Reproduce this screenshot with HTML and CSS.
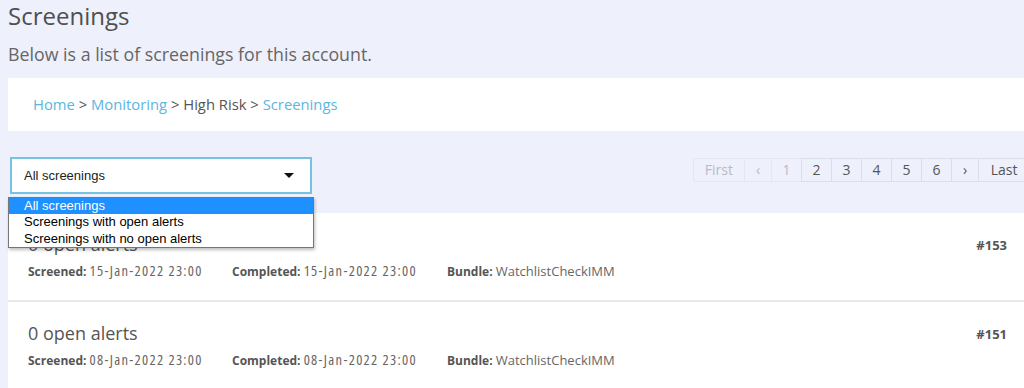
FILE: index.html
```html
<!DOCTYPE html>
<html>
<head>
    <title>Screenings</title>
    <link rel="stylesheet" href="styles.css">
</head>
<body>
    <div class="page">
        <h1 class="page-title">Screenings</h1>
        <p class="page-intro">Below is a list of screenings for this account.</p>

        <div class="breadcrumb">
            <a href="#">Home</a> &gt; <a href="#">Monitoring</a> &gt; High Risk &gt; <a href="#">Screenings</a>
        </div>

        <div class="toolbar">
            <div class="filter">
                <div class="filter-box">
                    <span>All screenings</span>
                    <span class="filter-arrow"></span>
                </div>
                <div class="filter-list">
                    <div class="filter-option selected">All screenings</div>
                    <div class="filter-option">Screenings with open alerts</div>
                    <div class="filter-option">Screenings with no open alerts</div>
                </div>
            </div>

            <div class="pager">
                <span class="page-item disabled">First</span>
                <span class="page-item disabled arrow">&lsaquo;</span>
                <span class="page-item disabled">1</span>
                <span class="page-item">2</span>
                <span class="page-item">3</span>
                <span class="page-item">4</span>
                <span class="page-item">5</span>
                <span class="page-item">6</span>
                <span class="page-item arrow">&rsaquo;</span>
                <span class="page-item">Last</span>
            </div>
        </div>

        <div class="screenings">
            <div class="screening">
                <div class="screening-head">
                    <div class="screening-title">0 open alerts</div>
                    <div class="screening-id">#153</div>
                </div>
                <div class="screening-meta">
                    <span class="meta"><b>Screened:</b> <span class="date">15-Jan-2022 23:00</span></span>
                    <span class="meta"><b>Completed:</b> <span class="date">15-Jan-2022 23:00</span></span>
                    <span class="meta"><b>Bundle:</b> <span class="bundle">WatchlistCheckIMM</span></span>
                </div>
            </div>
            <div class="screening">
                <div class="screening-head">
                    <div class="screening-title">0 open alerts</div>
                    <div class="screening-id">#151</div>
                </div>
                <div class="screening-meta">
                    <span class="meta"><b>Screened:</b> <span class="date">08-Jan-2022 23:00</span></span>
                    <span class="meta"><b>Completed:</b> <span class="date">08-Jan-2022 23:00</span></span>
                    <span class="meta"><b>Bundle:</b> <span class="bundle">WatchlistCheckIMM</span></span>
                </div>
            </div>
        </div>
    </div>
</body>
</html>
```

FILE: styles.css
```css
body {
    margin: 0;
    padding: 0;
    font-family: "Open Sans", sans-serif;
    background-color: #eef0fc;
    color: #555;
    overflow: hidden;
}
.page {
    width: 1022px;
    padding-left: 8px;
}
.page-title {
    margin: 0;
    padding-top: 1px;
    font-size: 24px;
    font-weight: 400;
    line-height: 30px;
    color: #4f4f4f;
}
.page-intro {
    margin: 11px 0 0;
    font-size: 17.8px;
    line-height: 24px;
    color: #666;
}
.breadcrumb {
    margin-top: 12px;
    height: 53px;
    padding-left: 25px;
    background-color: #fff;
    font-size: 14.8px;
    line-height: 53px;
    color: #555;
}
.breadcrumb a {
    color: #5cb6e0;
    text-decoration: none;
}
.toolbar {
    display: flex;
    justify-content: space-between;
    align-items: flex-start;
    margin-top: 26px;
    height: 56px;
    position: relative;
    z-index: 2;
}
.filter {
    position: relative;
    margin-left: 2px;
}
.filter-box {
    width: 298px;
    height: 33px;
    border: 2px solid #76c3e1;
    background-color: #fff;
    display: flex;
    align-items: center;
    justify-content: space-between;
    font-family: "Liberation Sans", Arial, sans-serif;
    font-size: 13px;
    color: #222;
}
.filter-box span:first-child {
    padding-left: 12px;
}
.filter-arrow {
    width: 0;
    height: 0;
    border-left: 5px solid transparent;
    border-right: 5px solid transparent;
    border-top: 5px solid #111;
    margin-right: 16px;
}
.filter-list {
    position: absolute;
    top: 40px;
    left: -2px;
    width: 304px;
    border: 1px solid #767676;
    background-color: #fff;
    box-shadow: 1px 2px 3px rgba(0, 0, 0, 0.25);
    font-family: "Liberation Sans", Arial, sans-serif;
    font-size: 13px;
    color: #000;
}
.filter-option {
    height: 16.4px;
    line-height: 16px;
    padding-left: 15px;
}
.filter-option.selected {
    background-color: #1e90ff;
    color: #fff;
}
.pager {
    display: flex;
    margin-top: 1px;
}
.page-item {
    height: 22px;
    line-height: 22px;
    min-width: 19px;
    padding: 0 5px;
    margin-left: -1px;
    border: 1px solid #dcdde6;
    text-align: center;
    font-size: 14px;
    color: #555;
}
.page-item:first-child {
    padding: 0 11px;
    border-radius: 3px 0 0 3px;
}
.page-item:last-child {
    padding: 0 10px;
    min-width: 30px;
}
.page-item.arrow {
    min-width: 16px;
}
.page-item.disabled {
    color: #b8bbc6;
    border-color: #e4e6f0;
}
.screenings {
    display: flex;
    flex-direction: column;
    gap: 2px;
    background-color: #e8e9ee;
}
.screening {
    background-color: #fff;
    padding: 19px 23px 20px 20px;
    height: 48px;
}
.screening-head {
    display: flex;
    justify-content: space-between;
    align-items: center;
}
.screening-title {
    font-size: 18px;
    line-height: 25px;
    color: #555;
}
.screening-id {
    font-size: 13px;
    font-weight: 700;
    color: #555;
}
.screening-meta {
    margin-top: 4px;
    display: flex;
    font-size: 12px;
    line-height: 20px;
    color: #666;
}
.meta {
    width: 204px;
}
.meta:nth-child(2) {
    width: 215px;
}
.meta b {
    color: #555;
}
.date {
    font-size: 14.5px;
    font-stretch: 80%;
    letter-spacing: 1.3px;
}
.bundle {
    font-size: 13px;
}
```
